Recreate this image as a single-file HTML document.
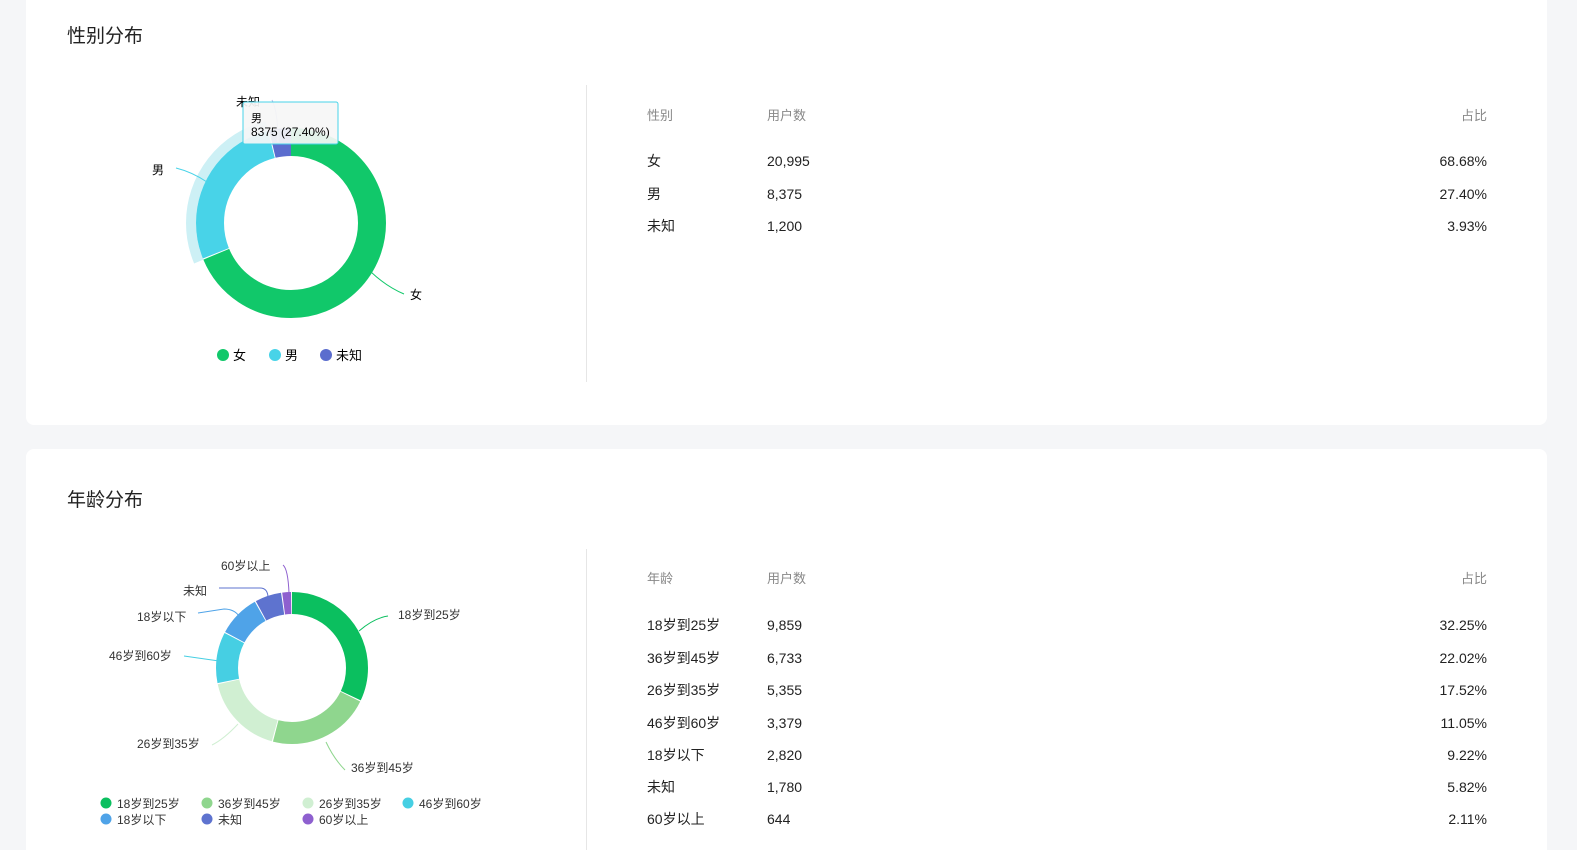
<!DOCTYPE html>
<html style="overflow:hidden;width:1577px;height:850px"><head><meta charset="utf-8"><style>
body{margin:0;width:1577px;height:850px;background:#f5f6f8;overflow:hidden;font-family:"Liberation Sans","Noto Sans CJK SC",sans-serif;color:#222;position:relative}
.card{position:absolute;left:26px;width:1521px;background:#fff;border-radius:8px}
.t{position:absolute;left:41px;font-size:19px;color:#222;line-height:24px}
.div{position:absolute;left:560px;width:1px;background:#e6e6e6}
.tx{position:absolute;font-size:14px;white-space:nowrap;line-height:16px}
.h{color:#888;font-size:13px}
.r{text-align:right;width:100px}
svg{position:absolute;left:0;top:0}
</style></head><body>
<div class="card" style="top:-10px;height:435px">
<div class="t" style="top:35px">性别分布</div>
<div class="div" style="top:95px;height:297px"></div>
</div>
<div class="card" style="top:449px;height:401px;border-radius:8px 8px 0 0">
<div class="t" style="top:40px">年龄分布</div>
<div class="div" style="top:100px;height:305px"></div>
</div>

<svg width="1577" height="850" font-family="Liberation Sans, Noto Sans CJK SC, sans-serif">
<g transform="translate(2,2)">
<g transform="rotate(-90 289 221)">
<circle cx="289" cy="221" r="100" fill="none" stroke="#cdf0f5" stroke-width="10" stroke-dasharray="172.2 1000" stroke-dashoffset="-431.5"/>
<circle cx="289" cy="221" r="81" fill="none" stroke="#11c86a" stroke-width="28" stroke-dasharray="349.5 1000"/>
<circle cx="289" cy="221" r="81" fill="none" stroke="#48d3e8" stroke-width="28" stroke-dasharray="138.4 1000" stroke-dashoffset="-350.5"/>
<circle cx="289" cy="221" r="81" fill="none" stroke="#5b6dce" stroke-width="28" stroke-dasharray="19 1000" stroke-dashoffset="-489.9"/>
</g>
<path d="M369 270 Q385 285 402 292" stroke="#11c86a" fill="none"/>
<path d="M174 166 Q190 170 205 180" stroke="#48d3e8" fill="none"/>
<path d="M270 98 Q276 110 276 140" stroke="#b8bde8" fill="none"/>
<text x="408" y="297" font-size="12">女</text>
<text x="150" y="172" font-size="12">男</text>
<text x="234" y="104" font-size="12">未知</text>
<rect x="241" y="100" width="95" height="42" fill="#f6f6f6" fill-opacity="0.92" stroke="#48d3e8" rx="2"/>
<text x="249" y="120" font-size="11">男</text>
<text x="249" y="134" font-size="12">8375 (27.40%)</text>
<circle cx="221" cy="353" r="6" fill="#11c86a"/><text x="231" y="358" font-size="13">女</text>
<circle cx="273" cy="353" r="6" fill="#48d3e8"/><text x="283" y="358" font-size="13">男</text>
<circle cx="324" cy="353" r="6" fill="#5b6dce"/><text x="334" y="358" font-size="13">未知</text>
</g>
<g transform="translate(2,4)">
<g transform="rotate(-90 290 664)" fill="none" stroke-width="22">
<circle cx="290" cy="664" r="65" stroke="#0bbf5f" stroke-dasharray="130.7 1000"/>
<circle cx="290" cy="664" r="65" stroke="#8fd68e" stroke-dasharray="88.9 1000" stroke-dashoffset="-131.7"/>
<circle cx="290" cy="664" r="65" stroke="#d0efd2" stroke-dasharray="70.6 1000" stroke-dashoffset="-221.6"/>
<circle cx="290" cy="664" r="65" stroke="#46cfe3" stroke-dasharray="44.1 1000" stroke-dashoffset="-293.2"/>
<circle cx="290" cy="664" r="65" stroke="#4fa3e8" stroke-dasharray="36.7 1000" stroke-dashoffset="-338.3"/>
<circle cx="290" cy="664" r="65" stroke="#5e73cf" stroke-dasharray="22.8 1000" stroke-dashoffset="-376"/>
<circle cx="290" cy="664" r="65" stroke="#8e60cf" stroke-dasharray="7.6 1000" stroke-dashoffset="-399.8"/>
</g>
<g fill="none">
<path d="M357 627 Q372 614 386 612" stroke="#0bbf5f"/>
<path d="M324 738 Q332 755 343 766" stroke="#8fd68e"/>
<path d="M236 720 Q222 735 210 741" stroke="#d0efd2"/>
<path d="M217 657 L182 652" stroke="#46cfe3"/>
<path d="M237 612 Q232 605 222 605 L196 609" stroke="#4fa3e8"/>
<path d="M266 594 Q266 584 258 584 L217 584" stroke="#5e73cf"/>
<path d="M287 589 Q286 565 281 561" stroke="#8e60cf"/>
</g>
<g font-size="12" fill="#333">
<text x="396" y="615">18岁到25岁</text>
<text x="349" y="768">36岁到45岁</text>
<text x="135" y="744">26岁到35岁</text>
<text x="107" y="656">46岁到60岁</text>
<text x="135" y="617">18岁以下</text>
<text x="181" y="591">未知</text>
<text x="219" y="566">60岁以上</text>
<circle cx="104" cy="799" r="5.5" fill="#0bbf5f"/><text x="115" y="804">18岁到25岁</text>
<circle cx="205" cy="799" r="5.5" fill="#8fd68e"/><text x="216" y="804">36岁到45岁</text>
<circle cx="306" cy="799" r="5.5" fill="#d0efd2"/><text x="317" y="804">26岁到35岁</text>
<circle cx="406" cy="799" r="5.5" fill="#46cfe3"/><text x="417" y="804">46岁到60岁</text>
<circle cx="104" cy="815" r="5.5" fill="#4fa3e8"/><text x="115" y="820">18岁以下</text>
<circle cx="205" cy="815" r="5.5" fill="#5e73cf"/><text x="216" y="820">未知</text>
<circle cx="306" cy="815" r="5.5" fill="#8e60cf"/><text x="317" y="820">60岁以上</text>
</g>
</g>
</svg>

<div class="tx h" style="left:647px;top:108px">性别</div>
<div class="tx h" style="left:767px;top:108px">用户数</div>
<div class="tx h r" style="left:1387px;top:108px">占比</div>
<div class="tx" style="left:647px;top:153px">女</div><div class="tx" style="left:767px;top:153px">20,995</div><div class="tx r" style="left:1387px;top:153px">68.68%</div>
<div class="tx" style="left:647px;top:186px">男</div><div class="tx" style="left:767px;top:186px">8,375</div><div class="tx r" style="left:1387px;top:186px">27.40%</div>
<div class="tx" style="left:647px;top:218px">未知</div><div class="tx" style="left:767px;top:218px">1,200</div><div class="tx r" style="left:1387px;top:218px">3.93%</div>

<div class="tx h" style="left:647px;top:571px">年龄</div>
<div class="tx h" style="left:767px;top:571px">用户数</div>
<div class="tx h r" style="left:1387px;top:571px">占比</div>
<div class="tx" style="left:647px;top:617px">18岁到25岁</div><div class="tx" style="left:767px;top:617px">9,859</div><div class="tx r" style="left:1387px;top:617px">32.25%</div>
<div class="tx" style="left:647px;top:650px">36岁到45岁</div><div class="tx" style="left:767px;top:650px">6,733</div><div class="tx r" style="left:1387px;top:650px">22.02%</div>
<div class="tx" style="left:647px;top:682px">26岁到35岁</div><div class="tx" style="left:767px;top:682px">5,355</div><div class="tx r" style="left:1387px;top:682px">17.52%</div>
<div class="tx" style="left:647px;top:715px">46岁到60岁</div><div class="tx" style="left:767px;top:715px">3,379</div><div class="tx r" style="left:1387px;top:715px">11.05%</div>
<div class="tx" style="left:647px;top:747px">18岁以下</div><div class="tx" style="left:767px;top:747px">2,820</div><div class="tx r" style="left:1387px;top:747px">9.22%</div>
<div class="tx" style="left:647px;top:779px">未知</div><div class="tx" style="left:767px;top:779px">1,780</div><div class="tx r" style="left:1387px;top:779px">5.82%</div>
<div class="tx" style="left:647px;top:811px">60岁以上</div><div class="tx" style="left:767px;top:811px">644</div><div class="tx r" style="left:1387px;top:811px">2.11%</div>
</body></html>
